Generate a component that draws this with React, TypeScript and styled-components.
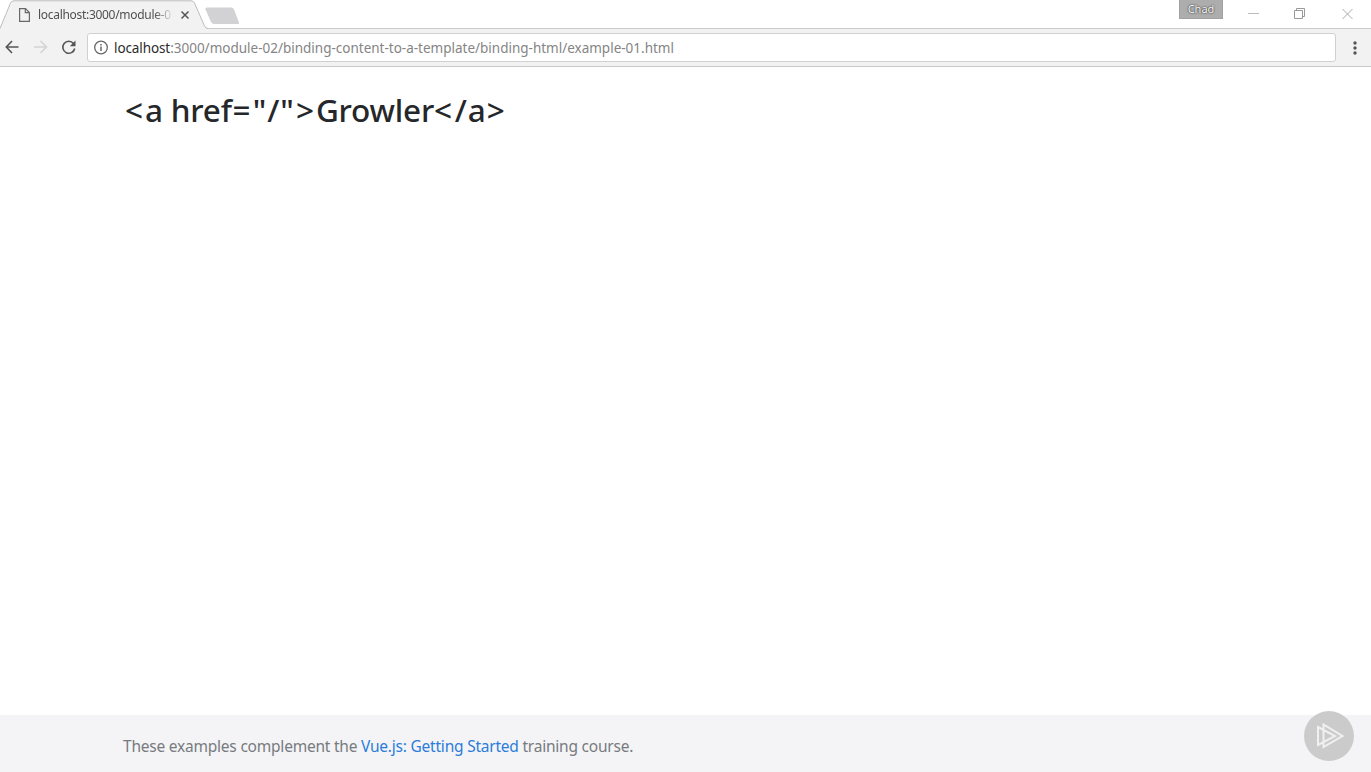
import React from "react";
import styled, { createGlobalStyle } from "styled-components";

const GlobalStyle = createGlobalStyle`
  * { box-sizing: border-box; }
  body { margin: 0; background: #fff; font-family: "Noto Sans", "Open Sans", sans-serif; }
`;

const Window = styled.div`
  height: 100vh;
  display: flex;
  flex-direction: column;
  overflow: hidden;
`;

const TabStrip = styled.header`
  position: relative;
  height: 29px;
  flex: none;
  display: flex;
  border-bottom: 1px solid #c9c9cb;
`;

const TabShapes = styled.svg`
  position: absolute;
  left: 0;
  top: 0;
`;

const Tab = styled.div`
  position: relative;
  width: 207px;
  height: 29px;
  padding-left: 19px;
  display: flex;
  align-items: center;
`;

const FileIcon = styled.svg`
  flex: none;
  margin-top: 1px;
`;

const TabTitle = styled.span`
  width: 133px;
  margin-left: 8px;
  white-space: nowrap;
  font-size: 12px;
  line-height: 18px;
  letter-spacing: -0.3px;
  color: #505050;
  mask-image: linear-gradient(to right, #000 116px, transparent 136px);
`;

const TabClose = styled.svg`
  flex: none;
  margin-left: 1px;
  margin-top: 1px;
`;

const WindowControls = styled.div`
  margin-left: auto;
  display: flex;
`;

const Profile = styled.div`
  width: 44px;
  height: 19px;
  margin-right: 24px;
  background: #adadad;
  border: 1px solid #a2a2a2;
  border-top: 0;
  color: #f8f8f8;
  font-size: 11px;
  line-height: 17px;
  text-align: center;
  text-shadow: 0 0 2px #333, 0 0 1px #444;
`;

const ControlIcons = styled.svg`
  flex: none;
`;

const Toolbar = styled.nav`
  height: 38px;
  flex: none;
  display: flex;
  align-items: center;
  background: #f2f2f2;
  border-bottom: 1px solid #c9c9cb;
`;

const NavIcons = styled.svg`
  flex: none;
  margin-top: -1px;
`;

const AddressBar = styled.div`
  width: 1249px;
  height: 29px;
  margin: -1px 1px 0;
  padding-left: 6px;
  display: flex;
  align-items: center;
  background: #fff;
  border: 1px solid #d0d0d2;
  border-radius: 3px;
`;

const Url = styled.span`
  margin: 1px 0 0 5px;
  font-size: 13.5px;
  line-height: 20px;
  white-space: nowrap;
  letter-spacing: -0.005px;
  color: #858585;
`;

const Host = styled.span`
  letter-spacing: -0.1px;
  color: #2b2b2b;
`;

const Page = styled.main`
  flex: 1;
  padding: 23px 0 0 123px;
`;

const Heading = styled.h1`
  margin: 0;
  display: flex;
  font-size: 31.5px;
  line-height: 40px;
  font-weight: 500;
  color: #25272a;
  white-space: pre;
`;

const Letters = styled.span<{ $width: number }>`
  width: ${(p) => p.$width}px;
  letter-spacing: -0.2px;
`;

const Bracket = styled.span`
  width: 22px;
  text-align: center;
`;

const Mark = styled(Bracket)`
  width: 13.8px;
`;

const Footer = styled.footer`
  height: 57px;
  flex: none;
  padding: 0 17px 0 123px;
  display: flex;
  align-items: center;
  justify-content: space-between;
  background: #f4f4f6;
`;

const FooterText = styled.p`
  margin: 5px 0 0;
  font-size: 15.5px;
  line-height: 24px;
  letter-spacing: -0.22px;
  color: #777b7f;
  white-space: nowrap;
`;

const CourseLink = styled.a`
  color: #2b7cdb;
  text-decoration: none;
`;

const PlayBadge = styled.svg`
  position: relative;
  top: -7.5px;
  flex: none;
`;

export default function App() {
  return (
    <Window>
      <GlobalStyle />
      <TabStrip>
        <TabShapes width="245" height="29" viewBox="0 0 245 29">
          <path d="M0 28.5 10.5 3Q11.5.8 14 .8H191Q193.500.8 194.500 3L204.500 26Q205.500 28.500 208 28.500V29H0Z" fill="#f2f2f2" />
          <path d="M0 28.500 10.500 3Q11.500.8 14 .8H191Q193.500.8 194.500 3L204.500 26Q205.500 28.500 208 28.500" fill="none" stroke="#bdbdbf" />
          <path d="M207 7.500H231Q233 7.500 234 9.500L239 22.500Q239.500 24 237.500 24H214Q212 24 211 22L205.500 9.500Q205 7.500 207 7.500Z" fill="#d2d2d4" />
        </TabShapes>
        <Tab>
          <FileIcon width="11" height="14" viewBox="0 0 11 14" fill="none" stroke="#686868" strokeWidth="1.2">
            <path d="M.6.6H6.500L10.400 4.500V13.400H.6ZM6.300.8V4.700H10.200" />
          </FileIcon>
          <TabTitle>localhost:3000/module-0</TabTitle>
          <TabClose width="24" height="12" viewBox="0 0 24 12" stroke="#555" strokeWidth="1.5">
            <path d="M9.500 2.500 16.500 9.500M16.500 2.500 9.500 9.500" />
          </TabClose>
        </Tab>
        <WindowControls>
          <Profile>Chad</Profile>
          <ControlIcons width="124" height="28" viewBox="0 0 124 28" fill="none" stroke="#aaa">
            <path d="M1 13.500H12" stroke="#bbb" />
            <path d="M47.500 10.500H55.500V18.500H47.500ZM49.500 10V8.500H57.500V16.500H56" stroke="#999" />
            <path d="M95.500 9 105.500 19M105.500 9 95.500 19" />
          </ControlIcons>
        </WindowControls>
      </TabStrip>
      <Toolbar>
        <NavIcons width="86" height="36" viewBox="0 0 86 36" fill="none" stroke="#555" strokeWidth="1.6">
          <path d="M18.500 18H7M12 12 6.300 18 12 24" />
          <path d="M34 18H46M40.500 12 46.500 18 40.500 24" stroke="#d4d4d4" />
          <path d="M73.500 14.500A6 6 0 1 0 74.700 19.500" />
          <path d="M75.500 11.500V17.200H69.800Z" fill="#555" stroke="none" />
        </NavIcons>
        <AddressBar>
          <svg width="15" height="15" viewBox="0 0 15 15" fill="none" stroke="#666" strokeWidth="1.3">
            <circle cx="7" cy="7.500" r="6.300" />
            <path d="M7 6.600V11M7 4V5.500" strokeWidth="1.500" />
          </svg>
          <Url>
            <Host>localhost</Host>:3000/module-02/binding-content-to-a-template/binding-html/example-01.html
          </Url>
        </AddressBar>
        <svg width="34" height="20" viewBox="0 0 34 20" fill="#555">
          <circle cx="18" cy="5" r="1.700" />
          <circle cx="18" cy="10" r="1.700" />
          <circle cx="18" cy="15" r="1.700" />
        </svg>
      </Toolbar>
      <Page>
        <Heading>
          <Bracket>{"<"}</Bracket>
          <Letters $width={85.5}>a href</Letters>
          <Bracket>=</Bracket>
          <Mark>"</Mark>
          <Mark>/</Mark>
          <Mark>"</Mark>
          <Bracket>{">"}</Bracket>
          <Letters $width={116}>Growler</Letters>
          <Bracket>{"<"}</Bracket>
          <Mark>/</Mark>
          <Letters $width={17}>a</Letters>
          <Bracket>{">"}</Bracket>
        </Heading>
      </Page>
      <Footer>
        <FooterText>
          These examples complement the <CourseLink>Vue.js: Getting Started</CourseLink> training course.
        </FooterText>
        <PlayBadge width="50" height="50" viewBox="0 0 50 50">
          <circle cx="25" cy="25" r="25" fill="#cbcbcb" />
          <path d="M14 16V34L31 25ZM19.500 13.500V36L38.500 25Z" fill="none" stroke="#f0f0f0" strokeWidth="2" />
        </PlayBadge>
      </Footer>
    </Window>
  );
}
